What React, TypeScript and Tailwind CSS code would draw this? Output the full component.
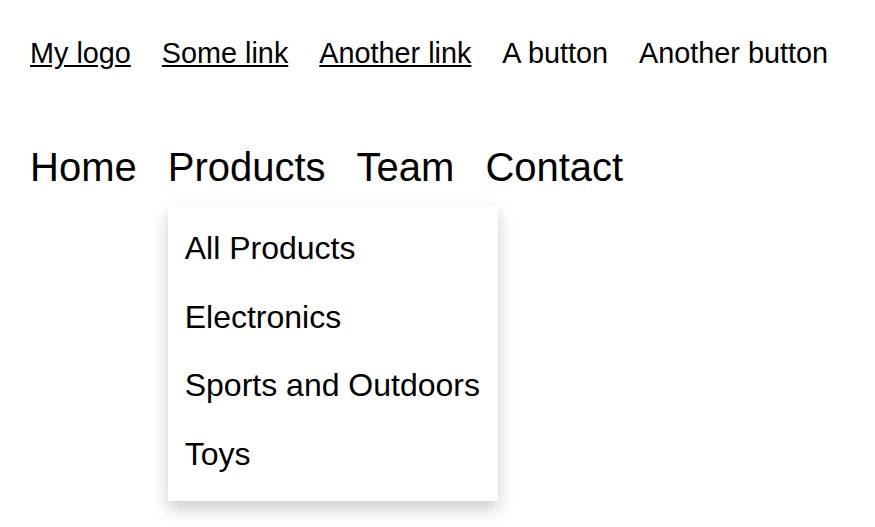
import { useState } from 'react';

const font = { fontFamily: '"Liberation Sans", Arial, Helvetica, sans-serif' };

export default function App() {
  const [open] = useState(true);
  const items = ['All Products', 'Electronics', 'Sports and Outdoors', 'Toys'];

  return (
    <div className="min-h-screen bg-white text-black pl-[30px] pt-[37px]" style={font}>
      {/* top bar */}
      <div className="flex items-center gap-[31px] text-[28.8px] leading-[33px]">
        <a href="#" className="underline">My logo</a>
        <a href="#" className="underline">Some link</a>
        <a href="#" className="underline">Another link</a>
        <button>A button</button>
        <button>Another button</button>
      </div>

      {/* main nav */}
      <nav className="mt-[74px] flex gap-[31px] text-[40px] leading-[46px]">
        <a href="#">Home</a>
        <div className="relative">
          <a href="#">Products</a>
          {open && (
            <div className="absolute left-0 top-[61px] w-[330px] bg-white pt-[9px] pb-[13px] px-[17px] shadow-[0_8px_16px_0_rgba(0,0,0,0.2)]">
              {items.map((item) => (
                <a key={item} href="#" className="block text-[32px] leading-[68.5px] whitespace-nowrap">
                  {item}
                </a>
              ))}
            </div>
          )}
        </div>
        <a href="#">Team</a>
        <a href="#">Contact</a>
      </nav>
    </div>
  );
}
